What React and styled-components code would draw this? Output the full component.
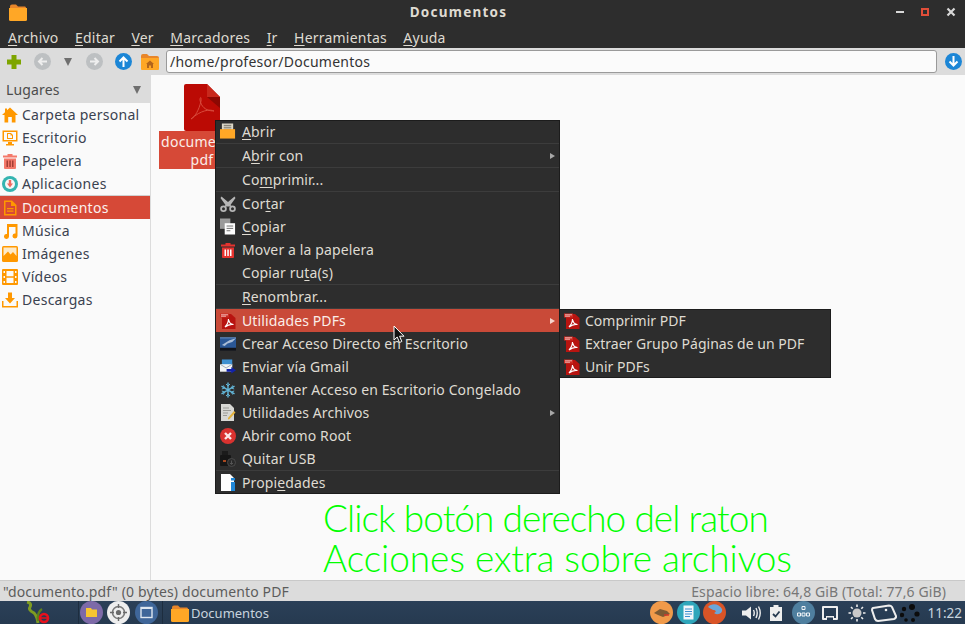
import styled, { createGlobalStyle } from 'styled-components'

const GlobalStyle = createGlobalStyle`
  html, body {
    margin: 0;
    padding: 0;
    background: #fafafa;
  }
  * {
    box-sizing: border-box;
  }
  u {
    text-underline-offset: 2px;
  }
`

const Page = styled.div`
  position: relative;
  width: 965px;
  height: 624px;
  overflow: hidden;
  display: flex;
  flex-direction: column;
  font-family: "Noto Sans", "Open Sans", sans-serif;
  font-size: 14px;
  color: #3c3c3c;
`

const TitleBar = styled.header`
  height: 24px;
  background: #2d2d2d;
  color: #dfdbd2;
  display: flex;
  align-items: center;
  padding: 0 9px;
`

const TitleIcon = styled.span`
  width: 18px;
  display: flex;
`

const Title = styled.div`
  flex: 1;
  text-align: center;
  font-weight: 700;
  font-size: 13.5px;
  letter-spacing: 1.25px;
  padding-right: 6px;
`

const WindowButtons = styled.div`
  display: flex;
  align-items: center;
  gap: 17px;
`

const MenuBar = styled.nav`
  height: 24px;
  background: #2d2d2d;
  color: #dfdbd2;
  display: flex;
  align-items: center;
  gap: 16.4px;
  padding: 2px 8px 0;
  font-size: 14px;
  letter-spacing: 0.22px;
`

const Toolbar = styled.div`
  height: 27px;
  background: #dcdcdc;
  display: flex;
  align-items: center;
  padding-left: 5px;
`

const ToolSlot = styled.span`
  width: ${p => p.$w}px;
  margin-left: ${p => p.$ml || 0}px;
  display: flex;
  justify-content: center;
  align-items: center;
  flex: none;
`

const PathInput = styled.div`
  flex: 1;
  height: 23px;
  background: #fbfbfb;
  border: 1px solid #9a9a9a;
  border-radius: 3px;
  color: #333;
  font-size: 14px;
  line-height: 21px;
  padding-left: 3px;
  letter-spacing: 0.25px;
`

const Main = styled.div`
  flex: 1;
  min-height: 0;
  display: flex;
  background: #fafafa;
`

const Sidebar = styled.aside`
  width: 151px;
  border-right: 1px solid #dcdcdc;
  flex: none;
`

const SideHeader = styled.div`
  height: 28px;
  background: #dcdcdc;
  color: #4c4c4c;
  display: flex;
  align-items: center;
  justify-content: space-between;
  padding: 1px 9px 0 6px;
  letter-spacing: 0.15px;
`

const DownTriangle = styled.span`
  width: 0;
  height: 0;
  border-left: 4px solid transparent;
  border-right: 4px solid transparent;
  border-top: 8px solid ${p => p.$color || '#6f6f6f'};
`

const SideRow = styled.div`
  height: 23px;
  width: 150px;
  margin-top: ${p => (p.$active ? 1 : 0)}px;
  display: flex;
  align-items: center;
  gap: 4px;
  padding-left: 2px;
  letter-spacing: 0.27px;
  color: ${p => (p.$active ? '#fbf1ee' : '#3a4250')};
  background: ${p => (p.$active ? '#d64937' : 'transparent')};
  box-shadow: ${p => (p.$active ? '0 -1px 0 #d0d0d0' : 'none')};
`

const IconBox = styled.span`
  width: 16px;
  height: 16px;
  flex: none;
  display: flex;
  align-items: center;
  justify-content: center;
`

const FileArea = styled.section`
  flex: 1;
  padding: 9px 0 0 8px;
`

const FileItem = styled.div`
  width: 86px;
  display: flex;
  flex-direction: column;
  align-items: center;
`

const FileLabel = styled.div`
  width: 100%;
  height: 38px;
  background: #d64937;
  color: #fbeee9;
  text-align: center;
  line-height: 17.5px;
  padding-top: 2px;
  letter-spacing: 0.25px;
`

const StatusBar = styled.footer`
  height: 21px;
  background: #dcdcdc;
  border-top: 1px solid #c9c9c9;
  color: #5c5c5c;
  display: flex;
  align-items: center;
  justify-content: space-between;
  padding: 0 19px 0 3px;
  font-size: 14px;
  letter-spacing: 0.14px;
`

const FreeSpace = styled.span`
  color: #777;
  letter-spacing: 0.12px;
`

const TaskBar = styled.footer`
  height: 23px;
  background: linear-gradient(#2b4058, #263a50);
  color: #c8d4de;
  display: flex;
  align-items: center;
  font-size: 13px;
`

const TaskSlot = styled.span`
  display: flex;
  align-items: center;
  justify-content: center;
  flex: none;
  width: ${p => p.$w}px;
  margin-left: ${p => p.$ml || 0}px;
`

const TaskDivider = styled.span`
  width: 1px;
  height: 23px;
  flex: none;
  background: #1d2d3f;
  margin-left: ${p => p.$ml}px;
`

const TaskTitle = styled.span`
  margin-left: 1px;
`

const Tray = styled.div`
  margin-left: auto;
  display: flex;
  align-items: center;
  padding-right: 3px;
`

const Clock = styled.span`
  margin-left: 6px;
  font-size: 13.5px;
`

const ContextMenu = styled.div`
  position: absolute;
  left: 215px;
  top: 120px;
  width: 345px;
  background: #2d2d2d;
  border: 1px solid #1c1c1c;
  color: #dfdbd2;
`

const SubMenu = styled(ContextMenu)`
  left: 559px;
  top: 309px;
  width: 272px;
  height: 69px;
  & > :first-child {
    margin-top: -1px;
  }
`

const MenuRow = styled.div`
  height: ${p => (p.$short ? 22 : 23)}px;
  display: flex;
  align-items: center;
  padding: 0 4px ${p => (p.$lift ? 2 : 0)}px;
  gap: 6px;
  letter-spacing: 0.12px;
  white-space: nowrap;
  background: ${p => (p.$active ? '#c94a38' : 'transparent')};
  color: ${p => (p.$active ? '#fbeee9' : '#dfdbd2')};
`

const SubRow = styled(MenuRow)`
  gap: 5px;
  letter-spacing: 0.02px;
`

const MenuSeparator = styled.div`
  height: 1px;
  background: #3c3c3c;
`

const Arrow = styled.span`
  margin-left: auto;
  width: 0;
  height: 0;
  border-top: 3px solid transparent;
  border-bottom: 3px solid transparent;
  border-left: 5px solid ${p => (p.$active ? '#f6d5cd' : '#a8a8a8')};
`

const Pointer = styled.svg`
  position: absolute;
  left: 393px;
  top: 325px;
`

const Caption = styled.div`
  position: absolute;
  left: 323px;
  top: 498px;
  color: #00ff00;
  font-family: Lato, "DejaVu Sans", sans-serif;
  font-weight: 300;
  font-size: 37px;
  line-height: 40px;
  white-space: nowrap;
`

const CaptionLine = styled.div`
  letter-spacing: ${p => p.$spacing}px;
`

const Folder = ({ size = 18, h = 18 }) => (
  <svg width={size} height={h} viewBox="0 0 18 18">
    <path d="M1 3.5 Q1 1.5 3 1.5 H7 L9 3.5 H16 Q17 3.5 17 5 V6 H1Z" fill="#e8862a" />
    <path d="M0 5 H18 V16.5 Q18 18 16.5 18 H1.5 Q0 18 0 16.5Z" fill="#ffa726" />
  </svg>
)

const HomeFolder = () => (
  <svg width="18" height="16" viewBox="0 0 18 16">
    <path d="M0 2 Q0 0 2 0 H6 L8 2 H16 Q18 2 18 4 V6 H0Z" fill="#e8862a" />
    <path d="M0 4 H18 V15 Q18 16 17 16 H1 Q0 16 0 15Z" fill="#ffa726" />
    <path d="M5 10 L9 6.5 13 10 H12 V14 H10 V11.5 H8 V14 H6 V10Z" fill="#b3651c" />
  </svg>
)

const AddIcon = () => (
  <svg width="16" height="16" viewBox="0 0 16 16">
    <path d="M5.5 1 H10.5 V5.5 H15 V10.5 H10.5 V15 H5.5 V10.5 H1 V5.5 H5.5Z" fill="#7ea500" />
  </svg>
)

const NavCircle = ({ fill, dir }) => (
  <svg width="17" height="17" viewBox="0 0 17 17">
    <circle cx="8.5" cy="8.5" r="8.5" fill={fill} />
    {dir === 'left' && <path d="M13 8.5 H5 M8.5 5 L5 8.5 8.5 12" stroke="#eee" strokeWidth="2" fill="none" />}
    {dir === 'right' && <path d="M4 8.5 H12 M8.5 5 L12 8.5 8.5 12" stroke="#eee" strokeWidth="2" fill="none" />}
    {dir === 'up' && <path d="M8.5 14 V5 M4.5 8.5 L8.5 4.5 12.5 8.5" stroke="#fff" strokeWidth="2" fill="none" />}
    {dir === 'down' && <path d="M8.5 3 V12 M4.5 8.5 L8.5 12.5 12.5 8.5" stroke="#fff" strokeWidth="2" fill="none" />}
  </svg>
)

const HomeIcon = () => (
  <svg width="16" height="16" viewBox="0 0 16 16">
    <path d="M8 0.5 L16 8 H13.5 V15.5 H9.8 V10 H6.2 V15.5 H2.5 V8 H0 L3 5.2 V1.5 H5 V3.3Z" fill="#ff9800" />
  </svg>
)

const DesktopIcon = () => (
  <svg width="16" height="16" viewBox="0 0 16 16">
    <path d="M0.5 0.5 H15.5 V11.5 H0.5Z M2 2 V10 H14 V2Z" fill="#ff9800" fillRule="evenodd" />
    <path d="M5 3 H9 L11 5 V9 H5Z M6 4 V8 H10 V5.5 H8.5 V4Z" fill="#ff9800" fillRule="evenodd" />
    <path d="M6 12 H10 V14 H12 V15.5 H4 V14 H6Z" fill="#ff9800" />
  </svg>
)

const TrashIcon = ({ fill = '#f4796a' }) => (
  <svg width="16" height="16" viewBox="0 0 16 16">
    <path d="M5.5 1 H10.5 V2.5 H15 V4.5 H1 V2.5 H5.5Z" fill={fill} />
    <path d="M2 5.5 H14 V15 Q14 16 13 16 H3 Q2 16 2 15Z" fill={fill} />
    <path d="M4.5 7.5 H6 V14 H4.5Z M7.3 7.5 H8.8 V14 H7.3Z M10 7.5 H11.5 V14 H10Z" fill={fill === '#f4796a' ? '#a33f35' : '#ffffff'} />
  </svg>
)

const AppsIcon = () => (
  <svg width="16" height="16" viewBox="0 0 16 16">
    <circle cx="8" cy="8" r="8" fill="#35b4b0" />
    <circle cx="8" cy="8" r="5" fill="#f7f7f7" />
    <path d="M6.8 4 H9.2 V7.5 H11 L8 11.5 5 7.5 H6.8Z" fill="#ee6a60" />
  </svg>
)

const DocIcon = () => (
  <svg width="14" height="16" viewBox="0 0 14 16">
    <path d="M1 0.5 H9 L13.5 5 V15.5 H1Z M2.5 2 V14 H12 V6 H8 V2Z" fill="#ff9800" fillRule="evenodd" />
    <path d="M4 8 H10.5 V9.3 H4Z M4 10.5 H10.5 V11.8 H4Z" fill="#ff9800" />
  </svg>
)

const MusicIcon = () => (
  <svg width="16" height="16" viewBox="0 0 16 16">
    <path d="M5 1 H15.5 V13 A2.5 2.5 0 1 1 13.5 10.6 V4 H7 V13.5 A2.5 2.5 0 1 1 5 11Z" fill="#ff9800" />
  </svg>
)

const PictureIcon = () => (
  <svg width="16" height="16" viewBox="0 0 16 16">
    <rect width="16" height="16" rx="1.5" fill="#ff9800" />
    <path d="M1.5 1.5 H14.5 V10 L11 6 8.5 8.5 6 5.5 1.5 10Z" fill="#fdeac8" />
  </svg>
)

const FilmIcon = () => (
  <svg width="16" height="16" viewBox="0 0 16 16">
    <path
      d="M1 0 H15 Q16 0 16 1 V15 Q16 16 15 16 H1 Q0 16 0 15 V1 Q0 0 1 0Z M1.5 2 V4 H3 V2Z M1.5 7 V9 H3 V7Z M1.5 12 V14 H3 V12Z M13 2 V4 H14.5 V2Z M13 7 V9 H14.5 V7Z M13 12 V14 H14.5 V12Z M4.5 2 V7.3 H11.5 V2Z M4.5 8.7 V14 H11.5 V8.7Z"
      fill="#ff9800"
      fillRule="evenodd"
    />
  </svg>
)

const DownloadIcon = () => (
  <svg width="16" height="16" viewBox="0 0 16 16">
    <path d="M6 0.5 H10 V6 H13 L8 11.5 3 6 H6Z" fill="#ff9800" />
    <path d="M0 9 H1.5 V14 H14.5 V9 H16 V15.5 H0Z" fill="#ff9800" />
  </svg>
)

const BigPdf = () => (
  <svg width="36" height="47" viewBox="0 0 36 47">
    <path d="M2 0 H23 L36 13 V45 Q36 47 34 47 H2 Q0 47 0 45 V2 Q0 0 2 0Z" fill="#bb0a04" />
    <path d="M23 0 L36 13 H23Z" fill="#c8281c" />
    <path d="M23 13 H36 V24Z" fill="#8c0803" />
    <path
      d="M7 35 C11 33 15 26 17 17 C17.5 12 16 13 16 16 C17 22 21 27 30 27 C26 25 17 26 7 35Z"
      fill="none"
      stroke="#d84a3c"
      strokeWidth="1"
    />
  </svg>
)

const PdfIcon = () => (
  <svg width="16" height="16" viewBox="0 0 16 16">
    <path d="M2 1 H11 L15.5 5 V16 H2Z" fill="#b81410" />
    <rect x="0" y="0.5" width="9" height="4" fill="#cc2a22" />
    <path d="M1 1.8 H8 M1 3.2 H6" stroke="#f7d9d5" strokeWidth="0.8" />
    <path d="M5 14 C7 12 8.5 9 8.5 6 C9 9.5 11 11.5 13.5 11.5 C10.5 11 7.5 12 5 14Z" fill="none" stroke="#fff" strokeWidth="1.2" />
  </svg>
)

const OpenIcon = () => (
  <svg width="17" height="17" viewBox="0 0 17 17">
    <rect x="2" y="0" width="12" height="9" fill="#ddd8c8" />
    <path d="M4 2 H12 M4 4 H12 M4 6 H12" stroke="#77736a" strokeWidth="1" />
    <rect x="0" y="6" width="16" height="10" fill="#ffa726" />
  </svg>
)

const ScissorsIcon = () => (
  <svg width="16" height="16" viewBox="0 0 16 16">
    <path d="M1.5 0.5 L8 6 14.5 0.5 15.5 2 10.5 9 12 10.5 H4 L5.5 9 0.5 2Z" fill="#b5b5b5" />
    <circle cx="3.5" cy="12.7" r="2.4" fill="none" stroke="#b5b5b5" strokeWidth="1.8" />
    <circle cx="12.5" cy="12.7" r="2.4" fill="none" stroke="#b5b5b5" strokeWidth="1.8" />
  </svg>
)

const CopyIcon = () => (
  <svg width="17" height="17" viewBox="0 0 17 17">
    <rect x="0" y="0" width="11" height="11" fill="#9a9a9a" />
    <rect x="5" y="5" width="11" height="12" fill="#fdfdfd" />
    <path d="M7 8 H14 M7 10.5 H14 M7 13 H11" stroke="#6a6a6a" strokeWidth="1" />
  </svg>
)

const ShortcutIcon = () => (
  <svg width="17" height="14" viewBox="0 0 17 14">
    <rect width="17" height="12" fill="#2a5796" />
    <path d="M2 8 L10 3 17 1 13 5 8 6.5 5 9Z" fill="#a9bcd6" />
    <rect y="0" width="17" height="1" fill="#6f93c4" />
    <rect y="11" width="17" height="3" fill="#10131b" />
  </svg>
)

const MailIcon = () => (
  <svg width="17" height="16" viewBox="0 0 17 16">
    <rect x="2" y="0" width="11" height="7" fill="#3d8fd0" />
    <path d="M0 5 H13 V13 H0Z" fill="#f1f3f5" />
    <path d="M0 5 L6.5 9 13 5" stroke="#9aa7b3" fill="none" />
    <path d="M7 10 H12 V8 L17 11.5 12 15 V13 H7Z" fill="#1222a8" />
  </svg>
)

const SnowIcon = () => (
  <svg width="16" height="16" viewBox="0 0 16 16" stroke="#63b6d8" strokeWidth="1.4" fill="none">
    <path d="M8 0.5 V15.5 M1.5 4.2 L14.5 11.8 M14.5 4.2 L1.5 11.8" />
    <path d="M6 2 L8 4 10 2 M6 14 L8 12 10 14 M1.8 7 L4.5 6 3.5 3.5 M14.2 9 L11.5 10 12.5 12.5 M14.2 7 L11.5 6 12.5 3.5 M1.8 9 L4.5 10 3.5 12.5" strokeWidth="1" />
  </svg>
)

const NoteIcon = () => (
  <svg width="16" height="17" viewBox="0 0 16 17">
    <path d="M1 0 H10 L14 4 V17 H1Z" fill="#d8d8d4" />
    <path d="M3 4 H9 M3 6.5 H11 M3 9 H8 M3 11.5 H7" stroke="#9b9b96" strokeWidth="1" />
    <path d="M8 14 L14 7 15.5 8.5 9.5 15 8 15.5Z" fill="#e3b23a" />
  </svg>
)

const RootIcon = () => (
  <svg width="16" height="16" viewBox="0 0 16 16">
    <circle cx="8" cy="8" r="8" fill="#d9322f" />
    <path d="M5 5 L11 11 M11 5 L5 11" stroke="#fbe8e8" strokeWidth="2.4" />
  </svg>
)

const UsbIcon = () => (
  <svg width="16" height="16" viewBox="0 0 16 16">
    <rect x="2" y="0" width="6" height="4" fill="#1b1b1b" />
    <rect x="0" y="4" width="11" height="11" rx="1" fill="#161616" />
    <rect x="3" y="9" width="3" height="2" fill="#a8481f" />
    <circle cx="11.5" cy="11.5" r="4" fill="#2a2a2a" stroke="#4a4a4a" />
    <path d="M11.5 9.5 V13 M10 12 L11.5 13.5 13 12" stroke="#555" fill="none" />
  </svg>
)

const InfoIcon = () => (
  <svg width="15" height="17" viewBox="0 0 15 17">
    <path d="M0 0 H9 L13 4 V17 H0Z" fill="#fdfdfd" />
    <rect x="10" y="4" width="4" height="2.5" fill="#1f86d6" />
    <rect x="10" y="8" width="4" height="9" fill="#1f86d6" />
  </svg>
)

const CloseGlyph = () => (
  <svg width="10" height="10" viewBox="0 0 10 10">
    <path d="M1.5 1.5 L8.5 8.5 M8.5 1.5 L1.5 8.5" stroke="#d8d8d8" strokeWidth="2.2" />
  </svg>
)

const MinGlyph = () => (
  <svg width="8" height="4" viewBox="0 0 8 4">
    <rect width="8" height="2" y="1" fill="#d8d8d8" />
  </svg>
)

const MaxGlyph = () => (
  <svg width="8" height="8" viewBox="0 0 8 8">
    <rect x="1" y="1" width="6" height="6" fill="none" stroke="#e04e39" strokeWidth="2" />
  </svg>
)

const EveLogo = () => (
  <svg width="28" height="23" viewBox="0 0 28 23">
    <path d="M4 1 Q9 2 7 6 Q5 9 11 12 Q14 15 15 22" fill="none" stroke="#7f9c21" strokeWidth="3" />
    <path d="M19 8 Q14 11 15 20" fill="none" stroke="#5e7f1c" strokeWidth="2.4" />
    <circle cx="21" cy="17" r="4" fill="none" stroke="#e8101c" strokeWidth="2.6" />
    <path d="M18 17 H25" stroke="#e8101c" strokeWidth="1.5" />
  </svg>
)

const Badge = ({ fill, children }) => (
  <svg width="23" height="23" viewBox="0 0 23 23">
    <circle cx="11.5" cy="11.5" r="11.5" fill={fill} />
    {children}
  </svg>
)

const PanelIcon = ({ w = 18, children }) => (
  <svg width={w} height="18" viewBox={`0 0 ${w} 18`}>
    {children}
  </svg>
)

const Label = ({ text, at }) => {
  if (at === undefined) return <span>{text}</span>
  return (
    <span>
      {text.slice(0, at)}
      <u>{text[at]}</u>
      {text.slice(at + 1)}
    </span>
  )
}

const menus = [
  ['Archivo', 0],
  ['Editar', 0],
  ['Ver', 0],
  ['Marcadores', 0],
  ['Ir', 0],
  ['Herramientas', 0],
  ['Ayuda', 0],
]

const places = [
  { name: 'Carpeta personal', icon: <HomeIcon /> },
  { name: 'Escritorio', icon: <DesktopIcon /> },
  { name: 'Papelera', icon: <TrashIcon /> },
  { name: 'Aplicaciones', icon: <AppsIcon /> },
  { name: 'Documentos', icon: <DocIcon />, active: true },
  { name: 'Música', icon: <MusicIcon /> },
  { name: 'Imágenes', icon: <PictureIcon /> },
  { name: 'Vídeos', icon: <FilmIcon /> },
  { name: 'Descargas', icon: <DownloadIcon /> },
]

const actions = [
  { text: 'Abrir', at: 0, icon: <OpenIcon />, short: true, lift: true, sep: true },
  { text: 'Abrir con', at: 1, arrow: true, sep: true },
  { text: 'Comprimir...', at: 2, sep: true },
  { text: 'Cortar', at: 3, icon: <ScissorsIcon /> },
  { text: 'Copiar', at: 0, icon: <CopyIcon /> },
  { text: 'Mover a la papelera', icon: <TrashIcon fill="#e5332f" /> },
  { text: 'Copiar ruta(s)', at: 9, sep: true },
  { text: 'Renombrar...', at: 0, sep: true },
  { text: 'Utilidades PDFs', icon: <PdfIcon />, arrow: true, active: true },
  { text: 'Crear Acceso Directo en Escritorio', icon: <ShortcutIcon /> },
  { text: 'Enviar vía Gmail', icon: <MailIcon /> },
  { text: 'Mantener Acceso en Escritorio Congelado', icon: <SnowIcon /> },
  { text: 'Utilidades Archivos', icon: <NoteIcon />, arrow: true },
  { text: 'Abrir como Root', icon: <RootIcon /> },
  { text: 'Quitar USB', icon: <UsbIcon />, sep: true },
  { text: 'Propiedades', at: 5, icon: <InfoIcon />, short: true },
]

const pdfTools = ['Comprimir PDF', 'Extraer Grupo Páginas de un PDF', 'Unir PDFs']

export default function App() {
  return (
    <>
      <GlobalStyle />
      <Page>
        <TitleBar>
          <TitleIcon>
            <Folder />
          </TitleIcon>
          <Title>Documentos</Title>
          <WindowButtons>
            <MinGlyph />
            <MaxGlyph />
            <CloseGlyph />
          </WindowButtons>
        </TitleBar>

        <MenuBar>
          {menus.map(([text, at]) => (
            <Label key={text} text={text} at={at} />
          ))}
        </MenuBar>

        <Toolbar>
          <ToolSlot $w={18}><AddIcon /></ToolSlot>
          <ToolSlot $w={38}><NavCircle fill="#bdc0c2" dir="left" /></ToolSlot>
          <ToolSlot $w={14}><DownTriangle /></ToolSlot>
          <ToolSlot $w={38}><NavCircle fill="#bdc0c2" dir="right" /></ToolSlot>
          <ToolSlot $w={20}><NavCircle fill="#1c86d6" dir="up" /></ToolSlot>
          <ToolSlot $w={33}><HomeFolder /></ToolSlot>
          <PathInput>/home/profesor/Documentos</PathInput>
          <ToolSlot $w={24} $ml={4}><NavCircle fill="#1c86d6" dir="down" /></ToolSlot>
        </Toolbar>

        <Main>
          <Sidebar>
            <SideHeader>
              Lugares
              <DownTriangle />
            </SideHeader>
            {places.map(place => (
              <SideRow key={place.name} $active={place.active}>
                <IconBox>{place.icon}</IconBox>
                {place.name}
              </SideRow>
            ))}
          </Sidebar>
          <FileArea>
            <FileItem>
              <BigPdf />
              <FileLabel>
                documento.
                <br />
                pdf
              </FileLabel>
            </FileItem>
          </FileArea>
        </Main>

        <StatusBar>
          <span>"documento.pdf" (0 bytes) documento PDF</span>
          <FreeSpace>Espacio libre: 64,8 GiB (Total: 77,6 GiB)</FreeSpace>
        </StatusBar>

        <TaskBar>
          <TaskSlot $w={28} $ml={23}><EveLogo /></TaskSlot>
          <TaskDivider $ml={27} />
          <TaskSlot $w={23} $ml={1}>
            <Badge fill="#7d6aa8">
              <path d="M6 7 H11 L12 8.5 H17 V16 H6Z" fill="#f7c531" />
            </Badge>
          </TaskSlot>
          <TaskSlot $w={23} $ml={4}>
            <Badge fill="#eeeeee">
              <circle cx="11.5" cy="11.5" r="6" fill="none" stroke="#7a7a7a" strokeWidth="1.6" />
              <circle cx="11.5" cy="11.5" r="2.6" fill="#6a6a6a" />
              <path d="M11.5 3 V7 M11.5 16 V20 M3 11.5 H7 M16 11.5 H20" stroke="#6a6a6a" strokeWidth="1.4" />
            </Badge>
          </TaskSlot>
          <TaskSlot $w={23} $ml={5}>
            <Badge fill="#3f6699">
              <rect x="6" y="6.5" width="11" height="10" fill="none" stroke="#dfe7f0" strokeWidth="1.4" />
              <rect x="6" y="6" width="11" height="2" fill="#dfe7f0" />
            </Badge>
          </TaskSlot>
          <TaskDivider $ml={4} />
          <TaskSlot $w={20} $ml={7}><Folder size={20} h={18} /></TaskSlot>
          <TaskTitle>Documentos</TaskTitle>

          <Tray>
            <TaskSlot $w={23}>
              <Badge fill="#f09a4a">
                <path d="M4 12 L10 8 17 10 20 13 13 16 8 14Z" fill="#7c5a34" />
                <path d="M14 14 H19" stroke="#d8342c" strokeWidth="1.4" />
              </Badge>
            </TaskSlot>
            <TaskSlot $w={23} $ml={4}>
              <Badge fill="#2fa6bb">
                <path d="M6.5 4.5 H16.5 V18.5 H6.5Z" fill="#f2f6fb" />
                <path d="M8 8 H15 M8 10.5 H15 M8 13 H15 M8 15.5 H13" stroke="#3d8fd0" strokeWidth="1.2" />
              </Badge>
            </TaskSlot>
            <TaskSlot $w={23} $ml={3}>
              <Badge fill="#d95427">
                <path d="M5 6 C8 2 16 2 19 8 C20 12 15 15 11 12 C14 11 13 9 10 9 C9 8 8 8 5 6Z" fill="#6ca6d8" />
              </Badge>
            </TaskSlot>
            <TaskSlot $w={20} $ml={16}>
              <PanelIcon w={20}>
                <path d="M0 6.5 H4 L9 2.5 V15.5 L4 11.5 H0Z" fill="#eeeeee" />
                <path d="M11.5 6 Q13 9 11.5 12 M14 4 Q16.5 9 14 14 M16.5 2.5 Q20 9 16.5 15.5" stroke="#eeeeee" strokeWidth="1.4" fill="none" />
              </PanelIcon>
            </TaskSlot>
            <TaskSlot $w={14} $ml={7}>
              <PanelIcon w={14}>
                <path d="M1 3 H4.5 V1 H9.5 V3 H13 V17 H1Z" fill="#eeeeee" />
                <path d="M4 10 L6.5 12.5 10.5 7.5" stroke="#263a50" strokeWidth="1.8" fill="none" />
              </PanelIcon>
            </TaskSlot>
            <TaskSlot $w={23} $ml={9}>
              <Badge fill="#4f7f9f">
                <path d="M10 5.5 H13 V8.5 H10Z M5.5 12 H8.5 V15 H5.5Z M10 12 H13 V15 H10Z M14.5 12 H17.5 V15 H14.5Z" fill="none" stroke="#eef3f7" strokeWidth="1" />
              </Badge>
            </TaskSlot>
            <TaskSlot $w={18} $ml={6}>
              <PanelIcon>
                <path d="M2 2 H16 Q17 2 17 3 V15 Q17 16 16 16 H12 V13.5 H6 V16 H2 Q1 16 1 15 V3 Q1 2 2 2Z M3 4 V14 H5 V12 H13 V14 H15 V4Z" fill="#eeeeee" fillRule="evenodd" />
              </PanelIcon>
            </TaskSlot>
            <TaskSlot $w={22} $ml={7}>
              <PanelIcon w={20}>
                <circle cx="10" cy="9" r="4.5" fill="#c9c9c9" />
                <path d="M10 0.5 V3 M10 15 V17.5 M1.5 9 H4 M16 9 H18.5 M4 3 L5.7 4.7 M14.3 13.3 L16 15 M16 3 L14.3 4.7 M5.7 13.3 L4 15" stroke="#eeeeee" strokeWidth="1.6" />
              </PanelIcon>
            </TaskSlot>
            <TaskSlot $w={26} $ml={3}>
              <svg width="26" height="18" viewBox="0 0 26 18">
                <path d="M2 4 L18 1.5 Q20 1.5 21 3 L25 12 Q25.5 14 23 15 L7 17 Q5 17 4 15 L1 6 Q1 4.5 2 4Z" fill="none" stroke="#eeeeee" strokeWidth="2" />
                <circle cx="15" cy="6" r="1.3" fill="#eeeeee" />
              </svg>
            </TaskSlot>
            <TaskSlot $w={22} $ml={2}>
              <PanelIcon w={20}>
                <circle cx="12" cy="3" r="3" fill="#0c0c0c" />
                <circle cx="4" cy="5" r="2.2" fill="#0c0c0c" />
                <circle cx="2" cy="11" r="2.2" fill="#0c0c0c" />
                <circle cx="6" cy="16" r="1.8" fill="#0c0c0c" />
                <circle cx="13" cy="16" r="2" fill="#0c0c0c" />
                <circle cx="17" cy="10" r="2.6" fill="#0c0c0c" />
              </PanelIcon>
            </TaskSlot>
            <Clock>11:22</Clock>
          </Tray>
        </TaskBar>

        <ContextMenu>
          {actions.map(item => (
            <div key={item.text}>
              <MenuRow $short={item.short} $lift={item.lift} $active={item.active}>
                <IconBox>{item.icon}</IconBox>
                <Label text={item.text} at={item.at} />
                {item.arrow && <Arrow $active={item.active} />}
              </MenuRow>
              {item.sep && <MenuSeparator />}
            </div>
          ))}
        </ContextMenu>

        <SubMenu>
          {pdfTools.map(tool => (
            <SubRow key={tool}>
              <IconBox><PdfIcon /></IconBox>
              {tool}
            </SubRow>
          ))}
        </SubMenu>

        <Pointer width="12" height="19" viewBox="0 0 12 19">
          <path d="M1 1 V15 L4.2 12 L6.5 17.5 L8.8 16.5 L6.6 11.2 H11Z" fill="#111" stroke="#fff" strokeWidth="1" />
        </Pointer>

        <Caption>
          <CaptionLine $spacing={-0.95}>Click botón derecho del raton</CaptionLine>
          <CaptionLine $spacing={-0.07}>Acciones extra sobre archivos</CaptionLine>
        </Caption>
      </Page>
    </>
  )
}
